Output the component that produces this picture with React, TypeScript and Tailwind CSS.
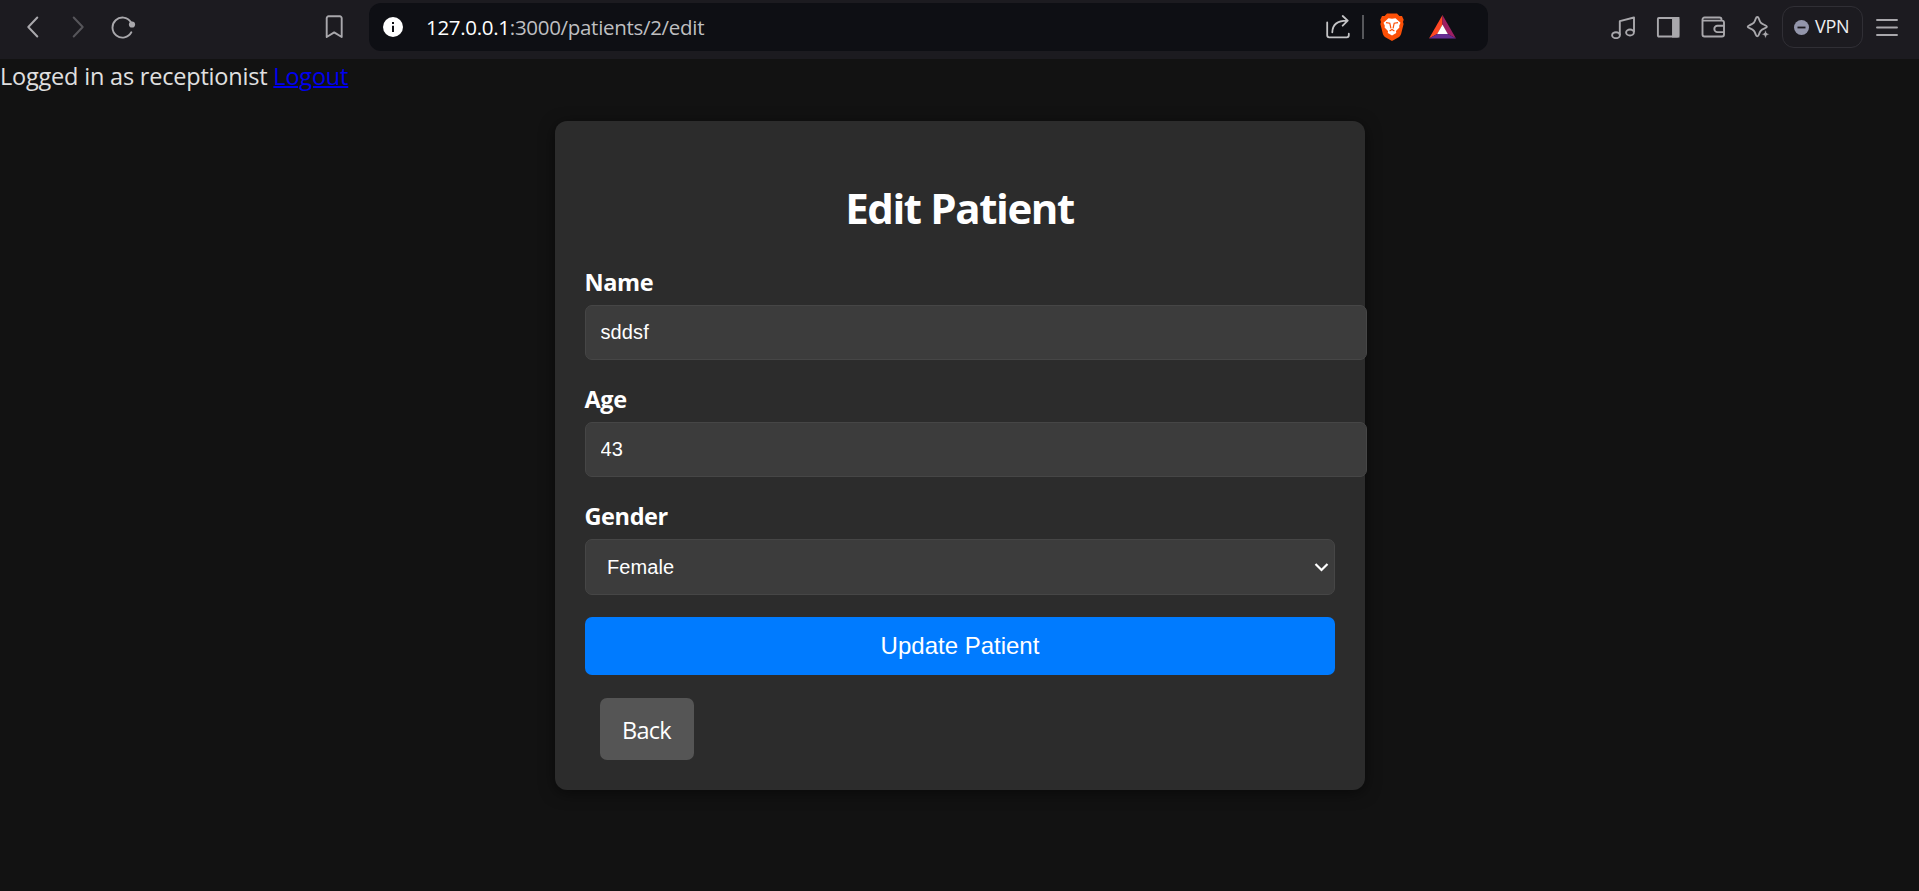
import React from "react";

const sans = "font-['Open_Sans','Noto_Sans',sans-serif]";
const arial = "font-['Liberation_Sans',Arial,sans-serif]";

function Toolbar() {
  return (
    <header className="flex h-[59px] shrink-0 items-start bg-[#1c1b20] text-[#a9a8ac]">
      <div className="flex h-[54px] w-[369px] items-center">
        <svg className="ml-[26px] h-6 w-[14px]" viewBox="0 0 14 24" fill="none" stroke="currentColor" strokeWidth="2" strokeLinecap="round" strokeLinejoin="round">
          <path d="M11.3 2.5 2.3 12l9 9.5" />
        </svg>
        <svg className="ml-[31px] h-6 w-[14px] text-[#56555a]" viewBox="0 0 14 24" fill="none" stroke="currentColor" strokeWidth="2" strokeLinecap="round" strokeLinejoin="round">
          <path d="M2.7 2.5 11.7 12l-9 9.5" />
        </svg>
        <svg className="ml-[25px] h-6 w-[26px]" viewBox="0 0 26 24" fill="none" stroke="currentColor" strokeWidth="1.9" strokeLinecap="round">
          <path d="M20.8 7A10 10 0 1 0 21.3 17.300" />
          <circle cx="22" cy="9.500" r="3.100" fill="currentColor" stroke="none" />
        </svg>
        <svg className="ml-[189px] h-6 w-[18px]" viewBox="0 0 18 24" fill="none" stroke="currentColor" strokeWidth="1.9" strokeLinejoin="round">
          <path d="M1.7 22V3.2A1.9 1.9 0 0 1 3.6 1.3h11.2a1.9 1.9 0 0 1 1.9 1.9V22l-7.500-4.600z" />
        </svg>
      </div>

      <div className="mt-[3px] flex h-12 w-[1119px] items-center rounded-xl bg-[#0e0f14]">
        <svg className="ml-[14px] h-5 w-5" viewBox="0 0 20 20">
          <circle cx="10" cy="10" r="10" fill="#fff" />
          <path d="M9 5h2v2H9zM9 8.7h2V15H9z" fill="#0e0f14" />
        </svg>
        <div className={`ml-[23px] text-[20.5px] leading-[28px] tracking-[-0.3px] whitespace-nowrap text-[#bfbfc1] ${sans}`}>
          <span className="text-white">127.0.0.1</span>:3000/patients/2/edit
        </div>
        <div className="mr-[32px] ml-auto flex items-center">
          <svg className="h-6 w-6 text-[#c4c4c6]" viewBox="0 0 24 24" fill="none" stroke="currentColor" strokeWidth="1.8" strokeLinecap="round" strokeLinejoin="round">
            <path d="M1.2 7.500v12.800a2 2 0 0 0 2 2h17.600a2 2 0 0 0 2-2v-1.600" />
            <path d="M6.300 17.300C6.500 10 11.500 5.700 21 5.700M16.700 1l5 4.700-5 5" />
          </svg>
          <div className="ml-[12px] h-6 w-[2px] bg-[#56575b]" />
          <svg className="ml-[16px] h-7 w-6" viewBox="0 0 24 28">
            <path d="M7 .4h10l2.400 2.600 2.600.1L23.700 6.700l-.7 2.400.6 1.800-2.500 10.200c-.3 1.200-1 2-2 2.800L12 28l-7.100-4.100c-1-.8-1.700-1.600-2-2.800L.4 10.900 1 9.100.3 6.700 2 3.100l2.600-.1z" fill="#fb5007" />
            <path d="M12 5.800l3.500-.6 5 4.600-1.300 2.900.2 1.800-3.400 3.600.2 1.800-4.200 2.700-4.200-2.700.2-1.800-3.400-3.600.2-1.800-1.300-2.900 5-4.600z" fill="#fff" />
            <path d="M6 9.600l3.800.6.6 2.600.5 2.500M18 9.600l-3.800.6-.6 2.600-.5 2.500M9.600 18l2.400-1.500 2.400 1.500" fill="none" stroke="#fb5007" strokeWidth="1.200" />
          </svg>
          <svg className="ml-[25px] h-6 w-[27px]" viewBox="0 0 27 24">
            <path d="M13.500 0 0 23.500l8.500-4.700 5-9z" fill="#ff4724" />
            <path d="M13.500 0 27 23.500l-8.500-4.700-5-9z" fill="#9e1f63" />
            <path d="M0 23.500h27l-8.500-4.700h-10z" fill="#662d91" />
            <path d="M13.500 9.500l5.300 9.500H8.200z" fill="#fff" />
          </svg>
        </div>
      </div>

      <div className="flex h-[54px] flex-1 items-center">
        <svg className="ml-[123px] h-6 w-6" viewBox="0 0 24 24" fill="none" stroke="currentColor" strokeWidth="1.9" strokeLinejoin="round">
          <path d="M8.800 20V6.200L23 2.500V17" />
          <ellipse cx="5" cy="20.200" rx="3.900" ry="3" />
          <ellipse cx="19" cy="17.500" rx="3.900" ry="3" />
        </svg>
        <svg className="ml-[21px] h-6 w-6" viewBox="0 0 24 24" fill="none" stroke="currentColor" strokeWidth="1.900">
          <rect x="1.900" y="3" width="20.400" height="18.500" rx="1" />
          <path d="M17 3h5.500v18.500H17z" fill="currentColor" />
        </svg>
        <svg className="ml-[21px] h-6 w-6" viewBox="0 0 24 24" fill="none" stroke="currentColor" strokeWidth="1.900" strokeLinejoin="round">
          <path d="M20.500 5.600V4.500a2 2 0 0 0-2-2H3.500a2 2 0 0 0-2 2v15a2 2 0 0 0 2 2h17.500a2 2 0 0 0 2-2V7.600a2 2 0 0 0-2-2H2" />
          <path d="M23 10.700h-6.500a3.200 3.200 0 0 0 0 6.400H23" />
        </svg>
        <svg className="ml-[21px] h-6 w-6" viewBox="0 0 24 24" fill="none" stroke="currentColor" strokeWidth="1.900" strokeLinejoin="round">
          <path d="M11.300 2c.9 0 1.200.6 1.500 1.500 1.300 3.900 1.800 4.800 5.800 6.500 1.200.5 2.300.9 2.300 1.700s-1 1.100-2.300 1.600c-4 1.700-4.500 2.900-5.800 6.500-.3.9-.6 1.500-1.500 1.500s-1.200-.6-1.500-1.500c-1.300-3.600-1.800-4.800-5.800-6.500-1.300-.5-2.300-.8-2.300-1.600s1.100-1.200 2.300-1.700c4-1.700 4.500-2.600 5.800-6.500.3-.9.6-1.500 1.500-1.500z" />
          <path d="M19.500 14.500l1.300 3.400 3.200 1.300-3.200 1.300-1.300 3.400-1.300-3.400-3.200-1.300 3.200-1.300z" fill="currentColor" stroke="#1c1b20" strokeWidth=".8" />
        </svg>
        <div className="ml-[12px] flex h-[42px] w-[81px] items-center rounded-xl border-[1.5px] border-[#302f35]">
          <svg className="ml-[11px] h-[15px] w-[15px]" viewBox="0 0 15 15">
            <circle cx="7.500" cy="7.500" r="7.500" fill="#9396ab" />
            <path d="M3.500 7.500h8" stroke="#1c1b20" strokeWidth="1.800" />
          </svg>
          <span className={`mb-[2px] ml-[6px] text-[18px] tracking-[-0.3px] text-[#eeeef0] ${sans}`}>VPN</span>
        </div>
        <svg className="ml-[13px] h-6 w-[22px]" viewBox="0 0 22 24" stroke="currentColor" strokeWidth="1.900" strokeLinecap="round">
          <path d="M1 5h20M1 12.500h20M1 20h20" />
        </svg>
      </div>
    </header>
  );
}

function Field({ label, value }: { label: string; value: string }) {
  return (
    <div className="mb-[22px] flex flex-col">
      <label className="mb-[6px] h-[34px] text-[23.5px] leading-[34px] font-bold tracking-[-0.4px]">{label}</label>
      <input
        defaultValue={value}
        className={`h-[55px] w-[782px] rounded-[7px] border border-[#464646] bg-[#3c3c3c] px-[15px] text-[20px] tracking-[0.1px] text-white outline-none ${arial}`}
      />
    </div>
  );
}

export default function App() {
  return (
    <div className={`flex h-[891px] w-full flex-col overflow-hidden bg-[#121212] text-white ${sans}`}>
      <Toolbar />
      <p className="h-[32px] text-[23.5px] leading-[34px] tracking-[-0.2px] whitespace-nowrap text-[#e0e0e0]">
        Logged in as receptionist{" "}
        <a href="#" className="text-[#0000ee] underline decoration-2">Logout</a>
      </p>
      <main className="mx-auto mt-[30px] h-[669px] w-[810px] rounded-xl bg-[#2c2c2c] px-[30px] shadow-[0_3px_15px_rgba(0,0,0,0.5)]">
        <h1 className="mt-[57px] h-[61px] text-center text-[42px] leading-[60px] font-bold tracking-[-1.4px]">Edit Patient</h1>
        <form className="mt-[26px]">
          <Field label="Name" value="sddsf" />
          <Field label="Age" value="43" />
          <div className="flex flex-col">
            <label className="mb-[6px] h-[34px] text-[23.5px] leading-[34px] font-bold tracking-[-0.4px]">Gender</label>
            <div className={`flex h-[56px] items-center justify-between rounded-[7px] border border-[#464646] bg-[#3c3c3c] pr-[5px] pl-[21.5px] text-[20px] tracking-[0.1px] ${arial}`}>
              Female
              <svg className="h-[10px] w-[15px]" viewBox="0 0 15 10" fill="none" stroke="#fff" strokeWidth="2.200">
                <path d="M1.500 2l6 6 6-6" />
              </svg>
            </div>
          </div>
          <button type="button" className={`mt-[22px] block h-[58px] w-full rounded-[7px] bg-[#007bff] pl-[1px] text-[24px] ${arial}`}>Update Patient</button>
        </form>
        <a href="#" className="mt-[23px] ml-[15px] flex h-[62px] w-[94px] items-center justify-center rounded-[7px] bg-[#555] pt-[4px] text-[23.5px] tracking-[-0.7px]">Back</a>
      </main>
    </div>
  );
}
